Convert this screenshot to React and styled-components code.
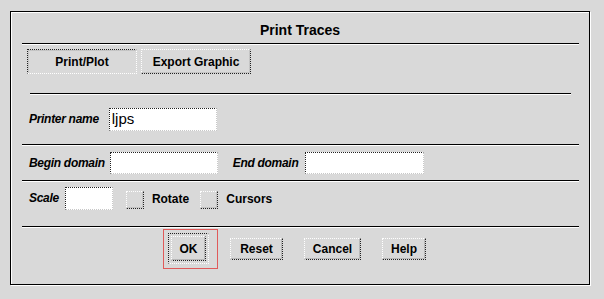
import React from 'react'
import styled, {createGlobalStyle} from 'styled-components';

const GlobalStyle = createGlobalStyle`
  html, body {
    margin: 0;
    padding: 0;
    background: #d9d9d9;
  }
  body {
    width: 604px;
    height: 299px;
    overflow: hidden;
    font-family: "Liberation Sans", Arial, sans-serif;
    font-size: 12px;
    color: #000;
  }
`;

function PrintTracesDialog() {
    return (
        <Page>
            <GlobalStyle/>
            <Frame>
                <Title>Print Traces</Title>
                <Separator/>
                <TabRow>
                    <TabButton $pressed>Print/Plot</TabButton>
                    <TabButton>Export Graphic</TabButton>
                </TabRow>
                <Separator $left={19} $right={18}/>
                <Row $height={49}>
                    <Label>Printer name</Label>
                    <Field $width={108} $height={23} $gap={10}>ljps</Field>
                </Row>
                <Separator/>
                <Row $height={34}>
                    <Label>Begin domain</Label>
                    <Field $width={108} $height={22} $gap={5}/>
                    <Label $gap={15}>End domain</Label>
                    <Field $width={119} $height={22} $gap={7}/>
                </Row>
                <Separator/>
                <Row $height={44} $top={5}>
                    <Label>Scale</Label>
                    <Field $width={48} $height={23} $gap={6}/>
                    <Check $gap={13}/>
                    <CheckLabel>Rotate</CheckLabel>
                    <Check $gap={11}/>
                    <CheckLabel>Cursors</CheckLabel>
                </Row>
                <Separator/>
                <ButtonRow>
                    <FocusBox>
                        <DefaultRing>
                            <PushButton $w={35} $h={25}>OK</PushButton>
                        </DefaultRing>
                    </FocusBox>
                    <PushButton $w={53} $gap={12}>Reset</PushButton>
                    <PushButton $w={57} $gap={21}>Cancel</PushButton>
                    <PushButton $w={44} $gap={21}>Help</PushButton>
                </ButtonRow>
            </Frame>
        </Page>
    );
}

export default PrintTracesDialog;

const Page = styled.div`
  padding: 11px 0 0 10px;
`;

const Frame = styled.div`
  box-sizing: border-box;
  width: 580px;
  height: 274px;
  border: 1px solid #000;
  box-shadow: inset 1px 1px 0 #fff, 1px 1px 0 #fff;
  display: flex;
  flex-direction: column;
`;

const Title = styled.div`
  height: 31px;
  box-sizing: border-box;
  padding-top: 10px;
  line-height: 16px;
  font-size: 14px;
  font-weight: bold;
  text-align: center;
`;

const Separator = styled.div`
  height: 0;
  border-top: 1px solid #000;
  border-bottom: 1px solid #fff;
  margin: 0 ${p => p.$right ?? 10}px 0 ${p => p.$left ?? 11}px;
`;

const TabRow = styled.div`
  display: flex;
  gap: 4px;
  height: 48px;
  box-sizing: border-box;
  padding: 4px 0 0 16px;
`;

const TabButton = styled.div`
  box-sizing: border-box;
  width: 110px;
  height: 25px;
  display: flex;
  align-items: center;
  justify-content: center;
  font-weight: bold;
  border-style: dotted;
  border-width: 1px;
  border-color: ${p => p.$pressed ? '#222 #fff #fff #222' : '#fff #222 #222 #fff'};
  box-shadow: ${p => p.$pressed ? 'inset 1px 1px 0 #c4c4c4' : 'inset -1px -1px 0 #c4c4c4'};
`;

const Row = styled.div`
  display: flex;
  align-items: ${p => p.$top ? 'flex-start' : 'center'};
  height: ${p => p.$height}px;
  box-sizing: border-box;
  padding: ${p => p.$top ?? 0}px 0 0 18px;
`;

const Label = styled.div`
  font-weight: bold;
  font-style: italic;
  letter-spacing: -0.3px;
  margin-left: ${p => p.$gap ?? 0}px;
  line-height: 23px;
`;

const Field = styled.div`
  box-sizing: border-box;
  width: ${p => p.$width}px;
  height: ${p => p.$height}px;
  margin-left: ${p => p.$gap}px;
  background: #fff;
  border-style: dotted;
  border-width: 1px;
  border-color: #222 #c8c8c8 #c8c8c8 #222;
  padding-left: 2px;
  font-size: 15px;
  line-height: ${p => p.$height - 3}px;
`;

const Check = styled.div`
  box-sizing: border-box;
  width: 18px;
  height: 18px;
  margin: 4px 0 0 ${p => p.$gap}px;
  border-style: dotted;
  border-width: 1px;
  border-color: #fff #222 #222 #fff;
  box-shadow: inset -1px -1px 0 #c4c4c4;
`;

const CheckLabel = styled.div`
  font-weight: bold;
  margin-left: 8px;
  line-height: 25px;
`;

const ButtonRow = styled.div`
  display: flex;
  align-items: center;
  padding: 1px 0 0 152px;
`;

const FocusBox = styled.div`
  box-sizing: border-box;
  width: 55px;
  height: 40px;
  border: 1px solid #e05a5a;
  padding: 3px 0 0 4px;
`;

const DefaultRing = styled.div`
  box-sizing: border-box;
  width: 41px;
  height: 31px;
  border-style: dotted;
  border-width: 1px;
  border-color: #222 #fff #fff #222;
  padding: 2px 0 0 2px;
`;

const PushButton = styled.div`
  box-sizing: border-box;
  width: ${p => p.$w}px;
  height: ${p => p.$h ?? 22}px;
  margin-left: ${p => p.$gap ?? 0}px;
  display: flex;
  align-items: center;
  justify-content: center;
  font-weight: bold;
  border-style: dotted;
  border-width: 1px;
  border-color: #fff #222 #222 #fff;
  box-shadow: inset -1px -1px 0 #b8b8b8;
`;
